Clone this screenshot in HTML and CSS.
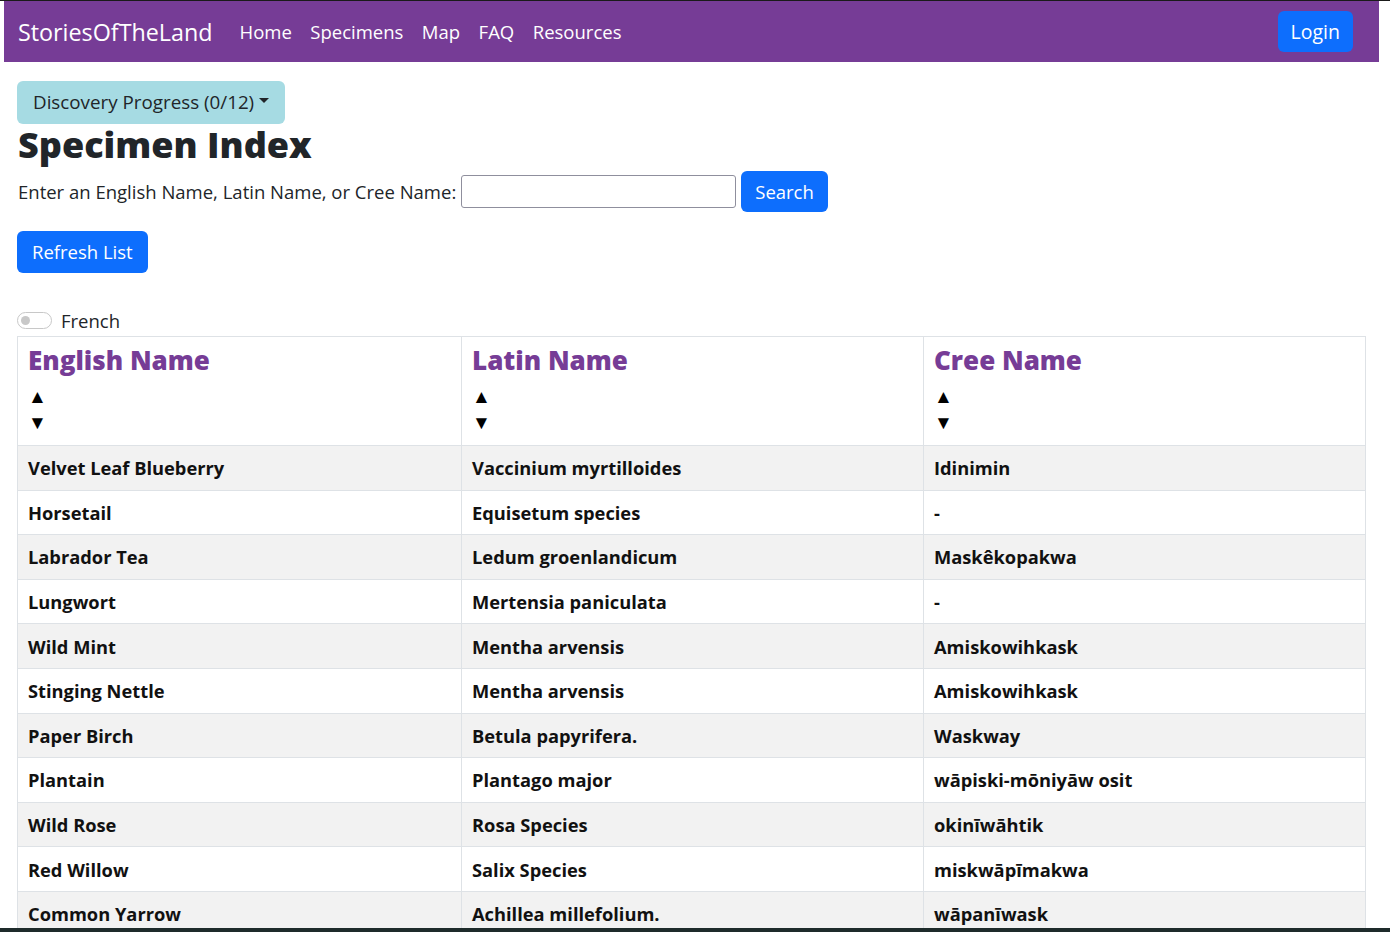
FILE: index.html
```html
<!DOCTYPE html>
<html lang="en">
<head>
<meta charset="utf-8">
<title>Specimen Index - StoriesOfTheLand</title>
<link rel="stylesheet" href="styles.css">
</head>
<body>
<div class="page">
  <nav class="navbar">
    <div class="nav-left">
      <a class="brand" href="#">StoriesOfTheLand</a>
      <ul class="nav-links">
        <li><a href="#">Home</a></li>
        <li><a href="#">Specimens</a></li>
        <li><a href="#">Map</a></li>
        <li><a href="#">FAQ</a></li>
        <li><a href="#">Resources</a></li>
      </ul>
    </div>
    <button class="btn btn-primary btn-login">Login</button>
  </nav>

  <main class="content">
    <button class="btn btn-info dropdown-toggle">Discovery Progress (0/12)<span class="caret"></span></button>
    <h1 class="title">Specimen Index</h1>

    <form class="search-form">
      <label for="q">Enter an English Name, Latin Name, or Cree Name:</label>
      <input id="q" type="text" class="search-input">
      <button type="button" class="btn btn-primary btn-search">Search</button>
    </form>

    <button class="btn btn-primary btn-refresh">Refresh List</button>

    <div class="toggle-row">
      <span class="switch"><span class="knob"></span></span>
      <span class="toggle-label">French</span>
    </div>

    <table class="specimens">
      <thead>
        <tr>
          <th class="col-en"><span class="th-title">English Name</span><span class="sort">▲</span><span class="sort">▼</span></th>
          <th class="col-la"><span class="th-title">Latin Name</span><span class="sort">▲</span><span class="sort">▼</span></th>
          <th class="col-cr"><span class="th-title">Cree Name</span><span class="sort">▲</span><span class="sort">▼</span></th>
        </tr>
      </thead>
      <tbody>
        <tr><td>Velvet Leaf Blueberry</td><td>Vaccinium myrtilloides</td><td>Idinimin</td></tr>
        <tr><td>Horsetail</td><td>Equisetum species</td><td>-</td></tr>
        <tr><td>Labrador Tea</td><td>Ledum groenlandicum</td><td>Maskêkopakwa</td></tr>
        <tr><td>Lungwort</td><td>Mertensia paniculata</td><td>-</td></tr>
        <tr><td>Wild Mint</td><td>Mentha arvensis</td><td>Amiskowihkask</td></tr>
        <tr><td>Stinging Nettle</td><td>Mentha arvensis</td><td>Amiskowihkask</td></tr>
        <tr><td>Paper Birch</td><td>Betula papyrifera.</td><td>Waskway</td></tr>
        <tr><td>Plantain</td><td>Plantago major</td><td>wāpiski-mōniyāw osit</td></tr>
        <tr><td>Wild Rose</td><td>Rosa Species</td><td>okinīwāhtik</td></tr>
        <tr><td>Red Willow</td><td>Salix Species</td><td>miskwāpīmakwa</td></tr>
        <tr><td>Common Yarrow</td><td>Achillea millefolium.</td><td>wāpanīwask</td></tr>
        <tr><td>Yellow Pond Lily</td><td>Nuphar variegata</td><td>Waskatamo</td></tr>
      </tbody>
    </table>
  </main>
</div>
<div class="bottom-bar"></div>
</body>
</html>
```

FILE: styles.css
```css
* { box-sizing: border-box; }

html, body {
  margin: 0;
  padding: 0;
}

body {
  font-family: "Open Sans", "Noto Sans", sans-serif;
  color: #212529;
  background: #fff;
  border-top: 1px solid #1a1a1a;
  font-size: 18.5px;
}

.page {
  margin: 0 11px 0 4px;
}

.navbar {
  background: #763c96;
  height: 61px;
  display: flex;
  align-items: center;
  justify-content: space-between;
  padding: 0 26px 0 14px;
}

.nav-left {
  display: flex;
  align-items: center;
}

.brand {
  color: #fff;
  text-decoration: none;
  font-size: 23.3px;
  margin-right: 27px;
}

.nav-links {
  list-style: none;
  display: flex;
  margin: 0;
  padding: 0;
  gap: 18.5px;
}

.nav-links a {
  color: #fff;
  text-decoration: none;
  font-size: 18.5px;
}

.btn {
  font-family: inherit;
  border: none;
  border-radius: 6px;
  cursor: pointer;
  font-size: 18.5px;
  line-height: 1.5;
}

.btn-primary {
  background: #0d6efd;
  color: #fff;
}

.btn-login {
  height: 41px;
  padding: 0 13px;
  font-size: 19.5px;
}

.content {
  padding: 19px 13px 0;
}

.btn-info {
  background: #a6dbe3;
  color: #212529;
  height: 43px;
  padding: 0 16px 0 16px;
  display: inline-flex;
  align-items: center;
  font-size: 18.8px;
}

.caret {
  display: inline-block;
  margin-left: 5px;
  margin-top: -4px;
  border-top: 5px solid #212529;
  border-left: 5px solid transparent;
  border-right: 5px solid transparent;
}

.title {
  font-size: 36px;
  font-weight: 800;
  margin: 0;
  line-height: 42px;
  padding-left: 1px;
}

.search-form {
  display: flex;
  align-items: center;
  margin-top: 5px;
  padding-left: 1px;
}

.search-form label {
  margin-right: 5px;
}

.search-input {
  width: 275px;
  height: 33px;
  border: 1px solid #8f8f9d;
  border-radius: 3px;
  font-family: inherit;
  font-size: 16px;
}

.btn-search {
  margin-left: 5px;
  height: 41px;
  padding: 0 14px;
}

.btn-refresh {
  display: block;
  margin-top: 19px;
  height: 42px;
  padding: 0 15px;
}

.toggle-row {
  display: flex;
  align-items: center;
  margin-top: 39px;
  height: 17px;
}

.switch {
  position: relative;
  width: 35px;
  height: 17px;
  border: 1px solid #c8c8c8;
  border-radius: 9px;
  display: inline-block;
}

.knob {
  position: absolute;
  left: 3px;
  top: 3px;
  width: 9px;
  height: 9px;
  border-radius: 50%;
  background: #c8c8c8;
}

.toggle-label {
  margin-left: 9px;
}

.specimens {
  width: 100%;
  border-collapse: collapse;
  margin-top: 7px;
  table-layout: fixed;
}

.specimens th,
.specimens td {
  border: 1px solid #dee2e6;
  text-align: left;
  padding: 0 10px;
  vertical-align: middle;
}

.col-en { width: 444px; }
.col-la { width: 462px; }

.specimens th {
  height: 109px;
  vertical-align: top;
  padding-top: 6px;
}

.th-title {
  display: block;
  color: #763c96;
  font-size: 26px;
  font-weight: 800;
  line-height: 34px;
  margin-bottom: 6px;
}

.sort {
  display: block;
  color: #000;
  font-size: 19px;
  line-height: 26px;
}

.specimens td {
  height: 44.6px;
  font-weight: 700;
  font-size: 18.3px;
  color: #111;
}

.specimens tbody tr:nth-child(odd) td {
  background: #f2f2f2;
}

.bottom-bar {
  position: fixed;
  left: 0;
  right: 0;
  bottom: 0;
  height: 4px;
  background: #1e2b2b;
}
```
